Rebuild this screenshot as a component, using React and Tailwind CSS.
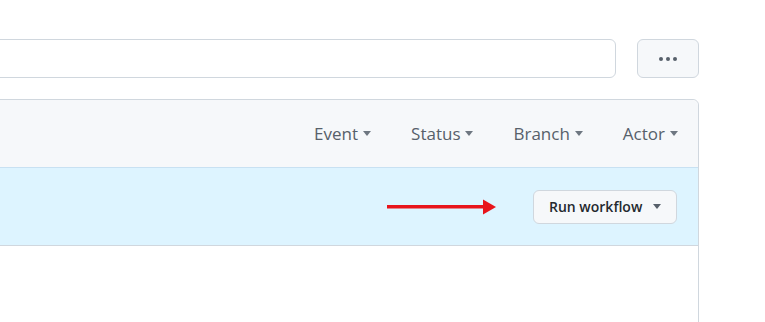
const filters = ['Event', 'Status', 'Branch', 'Actor'];

function Caret({ className = '' }) {
  return (
    <svg width="8" height="5" viewBox="0 0 8 5" className={className}>
      <path d="M0 0h8L4 5z" fill="currentColor" />
    </svg>
  );
}

export default function App() {
  return (
    <div className="h-[322px] w-[765px] overflow-hidden bg-white font-['Open_Sans',sans-serif]">
      <div className="-ml-3 pr-[66px] pt-[39px]">
        <div className="flex h-[39px] gap-[21px]">
          <div className="flex-1 rounded-md border border-[#d0d7de] bg-white" />
          <button className="flex w-[62px] items-center justify-center gap-[3px] rounded-md border border-[#d0d7de] bg-[#f6f8fa]">
            <span className="h-[4px] w-[4px] rounded-full bg-[#57606a]" />
            <span className="h-[4px] w-[4px] rounded-full bg-[#57606a]" />
            <span className="h-[4px] w-[4px] rounded-full bg-[#57606a]" />
          </button>
        </div>

        <div className="mt-[21px] h-[260px] rounded-t-md border border-[#d0d7de]">
          <div className="flex h-[67px] items-center justify-end gap-10 rounded-t-md bg-[#f6f8fa] pr-[20px] text-[17px] text-[#57606a]">
            {filters.map((f) => (
              <span key={f} className="flex items-center gap-[5px]">
                {f}
                <Caret className="text-[#6e7781]" />
              </span>
            ))}
          </div>
          <div className="flex h-[78px] items-center justify-end gap-[36px] border-t border-[#c8e1f2] bg-[#ddf4ff] pr-[21px]">
            <svg width="110" height="16" viewBox="0 0 110 16">
              <rect x="0" y="6" width="98" height="3.5" fill="#e8141b" />
              <path d="M96 0.5L109 8L96 15.5z" fill="#e8141b" />
            </svg>
            <button className="flex h-[34px] w-[144px] items-center justify-between rounded-md border border-[#d0d7de] bg-[#f6f8fa] pl-[15px] pr-[15px] text-[14px] font-semibold text-[#24292f]">
              Run workflow
              <Caret className="text-[#57606a]" />
            </button>
          </div>
          <div className="border-t border-[#d0d7de] bg-white" />
        </div>
      </div>
    </div>
  );
}
